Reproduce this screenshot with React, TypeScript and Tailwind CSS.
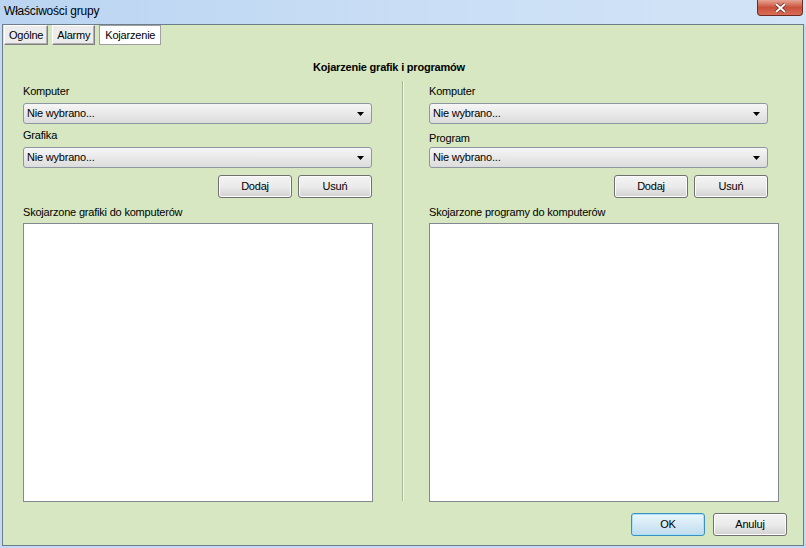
import React from "react";

const font = { fontFamily: '"Liberation Sans", Arial, sans-serif', letterSpacing: "-0.2px" };

function Combo() {
  return (
    <div className="h-[21px] w-full rounded-[3px] border border-[#8e979f] bg-gradient-to-b from-[#f6f6f6] to-[#dcdcdc] flex items-center justify-between pl-[3px] pr-[7px]">
      <span className="text-[11px] text-black leading-none">Nie wybrano...</span>
      <svg width="7" height="4" viewBox="0 0 7 4"><path d="M0 0H7L3.5 4Z" fill="#000" /></svg>
    </div>
  );
}

function Btn({ label, w = "w-[74px]", primary = false }: { label: string; w?: string; primary?: boolean }) {
  return (
    <div
      className={
        "h-[23px] " + w + " rounded-[3px] border flex items-center justify-center text-[11px] text-black " +
        (primary
          ? "border-[#3c8fc5] bg-gradient-to-b from-[#eaf6fd] to-[#c0dcee] shadow-[inset_0_0_0_1px_#a8e2f8]"
          : "border-[#707070] bg-gradient-to-b from-[#f3f3f3] via-[#ebebeb] to-[#d2d2d2] shadow-[inset_0_0_0_1px_#fcfcfc]")
      }
    >
      {label}
    </div>
  );
}

function Column({ second, listW, comboW, grafika }: { second: string; listW: string; comboW: string; grafika: boolean }) {
  return (
    <div className={"flex flex-col " + listW}>
      <div className="h-[12px] text-[11px] leading-[12px]">Komputer</div>
      <div className={"mt-[6px] " + comboW}><Combo /></div>
      <div className={"text-[11px] leading-[12px] " + (grafika ? "mt-[5px]" : "mt-[8px]")}>{second}</div>
      <div className={(grafika ? "mt-[6px] " : "mt-[3px] ") + comboW}><Combo /></div>
      <div className={"flex justify-end gap-[6px] mt-[7px] " + comboW}>
        <Btn label="Dodaj" />
        <Btn label="Usuń" />
      </div>
      <div className="text-[11px] leading-[12px] mt-[8px]">
        {grafika ? "Skojarzone grafiki do komputerów" : "Skojarzone programy do komputerów"}
      </div>
      <div className="mt-[5px] h-[279px] w-full bg-white border border-[#828790]" />
    </div>
  );
}

export default function App() {
  return (
    <div className="w-[806px] h-[548px] bg-[#c4daf2] flex flex-col text-black" style={font}>
      <div className="h-[24px] flex items-start justify-between bg-gradient-to-r from-[#bad4f1] via-[#c9def5] to-[#d2e4f7]">
        <div className="text-[12px] leading-[12px] mt-[5px] ml-[4px] text-black">Właściwości grupy</div>
        <div className="w-[46px] h-[16px] mr-[3px] rounded-b-[4px] border border-[#6b2a22] border-t-0 bg-gradient-to-b from-[#e5a494] via-[#c9503b] to-[#d96e58] flex items-center justify-center">
          <svg width="11" height="10" viewBox="0 0 11 10">
            <path d="M1 1L10 9M10 1L1 9" stroke="#5a1a12" strokeWidth="3.2" />
            <path d="M1 1L10 9M10 1L1 9" stroke="#fff" strokeWidth="2" />
          </svg>
        </div>
      </div>
      <div className="flex-1 mx-[2px] mb-[2px] border border-[#6d7d8b] bg-[#d6e7c1] flex flex-col">
        <div className="flex items-start gap-[4px] ml-[1px]">
          <div className="h-[20px] px-[4px] border border-t-[#fff] border-l-[#fff] border-r-[#808080] border-b-[#808080] bg-[#ececec] shadow-[inset_-1px_-1px_0_#b0b0b0] text-[11px] flex items-center">Ogólne</div>
          <div className="h-[20px] px-[4px] border border-t-[#fff] border-l-[#fff] border-r-[#808080] border-b-[#808080] bg-[#ececec] shadow-[inset_-1px_-1px_0_#b0b0b0] text-[11px] flex items-center">Alarmy</div>
          <div className="h-[20px] px-[5px] border border-[#a0a0a0] bg-white text-[11px] flex items-center">Kojarzenie</div>
        </div>
        <div className="text-center font-bold text-[11px] leading-[12px] mt-[16px] ml-[-28px]">Kojarzenie grafik i programów</div>
        <div className="flex mt-[12px] ml-[20px]">
          <Column second="Grafika" listW="w-[350px]" comboW="w-[349px]" grafika />
          <div className="ml-[29px] mt-[-4px] w-[2px] h-[420px] border-l border-[#a9b59b] bg-[#f2f7ec]" />
          <div className="ml-[25px]">
            <Column second="Program" listW="w-[350px]" comboW="w-[339px]" grafika={false} />
          </div>
        </div>
        <div className="flex justify-end gap-[8px] mt-[11px] mr-[16px]">
          <Btn label="OK" primary />
          <Btn label="Anuluj" />
        </div>
      </div>
    </div>
  );
}
